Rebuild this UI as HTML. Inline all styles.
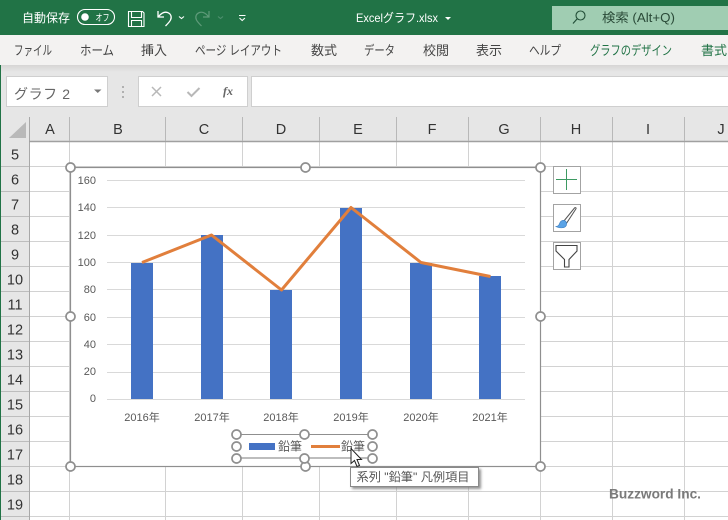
<!DOCTYPE html>
<html><head><meta charset="utf-8">
<style>
html,body{margin:0;padding:0;width:728px;height:520px;overflow:hidden;background:#fff}
body{position:relative;font-family:"Liberation Sans","Noto Sans CJK JP",sans-serif}
svg{position:absolute;left:0;top:0;filter:blur(.3px)}
</style></head>
<body>
<svg width="728" height="520" viewBox="0 0 728 520" font-family="'Liberation Sans','Noto Sans CJK JP',sans-serif">
<defs>
<linearGradient id="sh" x1="0" y1="0" x2="0" y2="1"><stop offset="0" stop-color="#d6d5d4"/><stop offset="1" stop-color="#e6e6e6"/></linearGradient>
<filter id="ts" x="-10%" y="-20%" width="120%" height="150%"><feDropShadow dx="2" dy="2" stdDeviation="1.2" flood-color="#777" flood-opacity=".8"/></filter>
</defs>
<!-- title bar -->
<rect x="0" y="0" width="728" height="35" fill="#217346"/>
<text x="22" y="22" font-size="12" fill="#fff">自動保存</text>
<rect x="77.500" y="9.500" width="37" height="15" rx="7.500" fill="none" stroke="#fff" stroke-width="1.100"/>
<circle cx="85" cy="17" r="3.800" fill="#fff"/>
<text x="95.500" y="21" font-size="9.500" fill="#fff" textLength="14" lengthAdjust="spacingAndGlyphs">オフ</text>
<path d="M128.500 11.500h14l1.500 1.500v13.500h-15.500z M131.500 11.500v6h10v-6 M131.500 26.500v-6h10v6" fill="none" stroke="#fff" stroke-width="1.100"/>
<path d="M158 11v6h6 M158.500 16.500c3-3.500 6-5 9-4 3.500 1.200 4.500 4.500 3 7.500-1 2-3 4-5 6" fill="none" stroke="#fff" stroke-width="1.300"/>
<path d="M179 16.500l2.500 2 2.500-2" fill="none" stroke="#fff" stroke-width="1.100"/>
<path d="M209 11v6h-6 M208.500 16.500c-3-3.500-6-5-9-4-3.500 1.200-4.500 4.500-3 7.500 1 2 3 4 5 6" fill="none" stroke="#5f9b7a" stroke-width="1.200"/>
<path d="M218 16.500l2.500 2 2.500-2" fill="none" stroke="#4f9070" stroke-width="1.100"/>
<path d="M239 15.500h6.500M239.500 18l2.700 2.500 2.700-2.500" fill="none" stroke="#fff" stroke-width="1.100"/>
<text x="356" y="22" font-size="12" fill="#fff" textLength="82" lengthAdjust="spacingAndGlyphs">Excelグラフ.xlsx</text>
<path d="M445 17h6l-3 3z" fill="#fff"/>
<rect x="552" y="6" width="176" height="24" fill="#a0cdb2"/>
<circle cx="580.500" cy="15.500" r="4.500" fill="none" stroke="#234f38" stroke-width="1.100"/>
<path d="M577 19l-4 4.500" stroke="#234f38" stroke-width="1.200"/>
<text x="602" y="22" font-size="12.500" fill="#2a4a38" textLength="73" lengthAdjust="spacingAndGlyphs">検索 (Alt+Q)</text>
<!-- ribbon tabs -->
<rect x="0" y="35" width="728" height="30" fill="#f3f2f1"/>
<g font-size="13" fill="#444">
<text x="14" y="55" textLength="38" lengthAdjust="spacingAndGlyphs">ファイル</text>
<text x="80" y="55" textLength="34" lengthAdjust="spacingAndGlyphs">ホーム</text>
<text x="141" y="55" textLength="26" lengthAdjust="spacingAndGlyphs">挿入</text>
<text x="195" y="55" textLength="87" lengthAdjust="spacingAndGlyphs">ページ レイアウト</text>
<text x="311" y="55" textLength="26" lengthAdjust="spacingAndGlyphs">数式</text>
<text x="364" y="55" textLength="31" lengthAdjust="spacingAndGlyphs">データ</text>
<text x="423" y="55" textLength="26" lengthAdjust="spacingAndGlyphs">校閲</text>
<text x="476" y="55" textLength="26" lengthAdjust="spacingAndGlyphs">表示</text>
<text x="529" y="55" textLength="32" lengthAdjust="spacingAndGlyphs">ヘルプ</text>
<text x="590" y="55" textLength="82" lengthAdjust="spacingAndGlyphs" fill="#217346">グラフのデザイン</text>
<text x="701" y="55" textLength="26" lengthAdjust="spacingAndGlyphs" fill="#217346">書式</text>
</g>
<!-- formula bar -->
<rect x="0" y="65" width="728" height="52" fill="#e6e6e6"/>
<rect x="0" y="65" width="728" height="7" fill="url(#sh)"/>
<rect x="6.500" y="76.500" width="101" height="30" fill="#fff" stroke="#cfcfcf"/>
<text x="14" y="99" font-size="14" fill="#666" textLength="56" lengthAdjust="spacing">グラフ 2</text>
<path d="M94 89.500h7.500l-3.750 3.500z" fill="#777"/>
<g fill="#b0b0b0"><rect x="122" y="86" width="2" height="2"/><rect x="122" y="91" width="2" height="2"/><rect x="122" y="96" width="2" height="2"/></g>
<rect x="138.500" y="76.500" width="109" height="30" fill="#fff" stroke="#cfcfcf"/>
<path d="M152 87l9 9M161 87l-9 9" stroke="#b8b8b8" stroke-width="1.500"/>
<path d="M187.500 92l4 4 8-8" fill="none" stroke="#b8b8b8" stroke-width="2"/>
<text x="223" y="95" font-size="12" font-family="'Liberation Serif',serif" font-style="italic" font-weight="bold" fill="#666">fx</text>
<rect x="251.500" y="76.500" width="480" height="30" fill="#fff" stroke="#cfcfcf"/>
<!-- grid -->
<g stroke="#d2d2d2" stroke-width="1">
<path d="M69.500 141V520M165.500 141V520M242.500 141V520M319.500 141V520M396.500 141V520M468.500 141V520M540.500 141V520M612.500 141V520M684.500 141V520"/>
<path d="M30 166.500H728M30 191.500H728M30 216.500H728M30 241.500H728M30 266.500H728M30 291.500H728M30 316.500H728M30 341.500H728M30 366.500H728M30 391.500H728M30 416.500H728M30 441.500H728M30 466.500H728M30 491.500H728M30 516.500H728"/>
</g>
<!-- headers -->
<rect x="0" y="117" width="728" height="24" fill="#e6e6e6"/>
<rect x="0" y="141" width="30" height="379" fill="#e6e6e6"/>
<path d="M9 138L26 122V138Z" fill="#b9b9b9"/>
<path d="M29.500 117V520" stroke="#a8a8a8"/>
<path d="M29 141.500H728" stroke="#a0a0a0" stroke-width="1.500"/>
<path d="M69.500 117V141M165.500 117V141M242.500 117V141M319.500 117V141M396.500 117V141M468.500 117V141M540.500 117V141M612.500 117V141M684.500 117V141" stroke="#b8b8b8"/>
<path d="M0 166.500H29M0 191.500H29M0 216.500H29M0 241.500H29M0 266.500H29M0 291.500H29M0 316.500H29M0 341.500H29M0 366.500H29M0 391.500H29M0 416.500H29M0 441.500H29M0 466.500H29M0 491.500H29M0 516.500H29" stroke="#bdbdbd"/>
<rect x="0" y="65" width="1" height="455" fill="#217346"/>
<g font-size="14.500" fill="#333" text-anchor="middle">
<text x="50" y="134">A</text><text x="118" y="134">B</text><text x="204" y="134">C</text><text x="281" y="134">D</text><text x="358" y="134">E</text><text x="432" y="134">F</text><text x="504" y="134">G</text><text x="576" y="134">H</text><text x="648" y="134">I</text><text x="721" y="134">J</text>
<text x="15" y="159.500">5</text><text x="15" y="184.500">6</text><text x="15" y="209.500">7</text><text x="15" y="234.500">8</text><text x="15" y="259.500">9</text><text x="15" y="284.500">10</text><text x="15" y="309.500">11</text><text x="15" y="334.500">12</text><text x="15" y="359.500">13</text><text x="15" y="384.500">14</text><text x="15" y="409.500">15</text><text x="15" y="434.500">16</text><text x="15" y="459.500">17</text><text x="15" y="484.500">18</text><text x="15" y="509.500">19</text>
</g>
<!-- chart -->
<rect x="70.500" y="167.500" width="470" height="299" fill="#fff" stroke="#8f8f8f" stroke-width="1.200"/>
<path d="M107 180.500H525M107 207.500H525M107 235.500H525M107 262.500H525M107 289.500H525M107 317.500H525M107 344.500H525M107 372.500H525M107 399.500H525" stroke="#d9d9d9"/>
<g font-size="11" fill="#595959" text-anchor="end">
<text x="96" y="184">160</text><text x="96" y="211">140</text><text x="96" y="239">120</text><text x="96" y="266">100</text><text x="96" y="293">80</text><text x="96" y="321">60</text><text x="96" y="348">40</text><text x="96" y="375">20</text><text x="96" y="402">0</text>
</g>
<g fill="#4472c4">
<rect x="131" y="263" width="22" height="136"/><rect x="201" y="235" width="22" height="164"/><rect x="270" y="290" width="22" height="109"/><rect x="340" y="208" width="22" height="191"/><rect x="410" y="263" width="22" height="136"/><rect x="479" y="276" width="22" height="123"/>
</g>
<path d="M142 262.500L211.500 235L281.500 290L351 207.500L421 262.500L490.500 276.500" fill="none" stroke="#e17f3c" stroke-width="3" stroke-linejoin="round"/>
<g font-size="11" fill="#595959" text-anchor="middle">
<text x="142" y="421">2016年</text><text x="212" y="421">2017年</text><text x="281" y="421">2018年</text><text x="351" y="421">2019年</text><text x="421" y="421">2020年</text><text x="490" y="421">2021年</text>
</g>
<!-- legend -->
<path d="M236 434.500H372" stroke="#8f8f8f"/>
<path d="M236 458H372" stroke="#bdbdbd" stroke-width="2"/>
<rect x="249" y="443" width="26" height="7" fill="#4472c4"/>
<text x="278" y="450.500" font-size="12" fill="#595959">鉛筆</text>
<path d="M311 446.500H340" stroke="#e17f3c" stroke-width="3"/>
<text x="341" y="450.500" font-size="12" fill="#595959">鉛筆</text>
<g fill="#fff" stroke="#8f8f8f" stroke-width="1.700">
<circle cx="70.500" cy="167.500" r="4.500"/><circle cx="305.500" cy="167.500" r="4.500"/><circle cx="540.500" cy="167.500" r="4.500"/>
<circle cx="70.500" cy="316.500" r="4.500"/><circle cx="540.500" cy="316.500" r="4.500"/>
<circle cx="70.500" cy="466.500" r="4.500"/><circle cx="305.500" cy="466.500" r="4.500"/><circle cx="540.500" cy="466.500" r="4.500"/>
<circle cx="236.500" cy="434.500" r="4.500"/><circle cx="304.500" cy="434.500" r="4.500"/><circle cx="372.500" cy="434.500" r="4.500"/>
<circle cx="236.500" cy="446.500" r="4.500"/><circle cx="372.500" cy="446.500" r="4.500"/>
<circle cx="236.500" cy="458.500" r="4.500"/><circle cx="304.500" cy="458.500" r="4.500"/><circle cx="372.500" cy="458.500" r="4.500"/>
</g>
<!-- tooltip -->
<rect x="350.500" y="467.500" width="128" height="19" fill="#fff" stroke="#8a8a8a" filter="url(#ts)"/>
<text x="356.500" y="481" font-size="12" fill="#555" textLength="113" lengthAdjust="spacingAndGlyphs">系列 "鉛筆" 凡例項目</text>
<!-- cursor -->
<path d="M351 448.500V463.500L354.500 460.500L357 466.500L359.500 465.500L357 459.500H361.500Z" fill="#fff" stroke="#222" stroke-width="1"/>
<!-- chart buttons -->
<g fill="#fff" stroke="#a3a3a3" stroke-width="1">
<rect x="553.500" y="166.500" width="27" height="27"/><rect x="553.500" y="204.500" width="27" height="27"/><rect x="553.500" y="242.500" width="27" height="27"/>
</g>
<path d="M556 179.500H577M566.500 169V190" stroke="#3d9a62" stroke-width="1"/>
<path d="M563.500 221.500l11-13.500c.7-.8 2-.2 1.500.8l-9.500 14.500z" fill="#fff" stroke="#555" stroke-width="1"/>
<path d="M555.500 226.500c3.500 0 3.500-2 4.500-4 1-2 3.200-2.800 5-1.700 2 1.300 2.200 4 .5 5.800-1.700 1.500-5.500 1.900-10 -.1z" fill="#5aa3e6" stroke="#3f7fc0" stroke-width=".6"/>
<path d="M556 245.500H577V251L569 259.500V267H564.500V259.500L556 251Z" fill="#fff" stroke="#444" stroke-width="1.100"/>
<!-- watermark -->
<text x="609" y="498.500" font-size="14" font-weight="bold" fill="#7a7a7a" textLength="92" lengthAdjust="spacingAndGlyphs">Buzzword Inc.</text>
</svg>
</body></html>
